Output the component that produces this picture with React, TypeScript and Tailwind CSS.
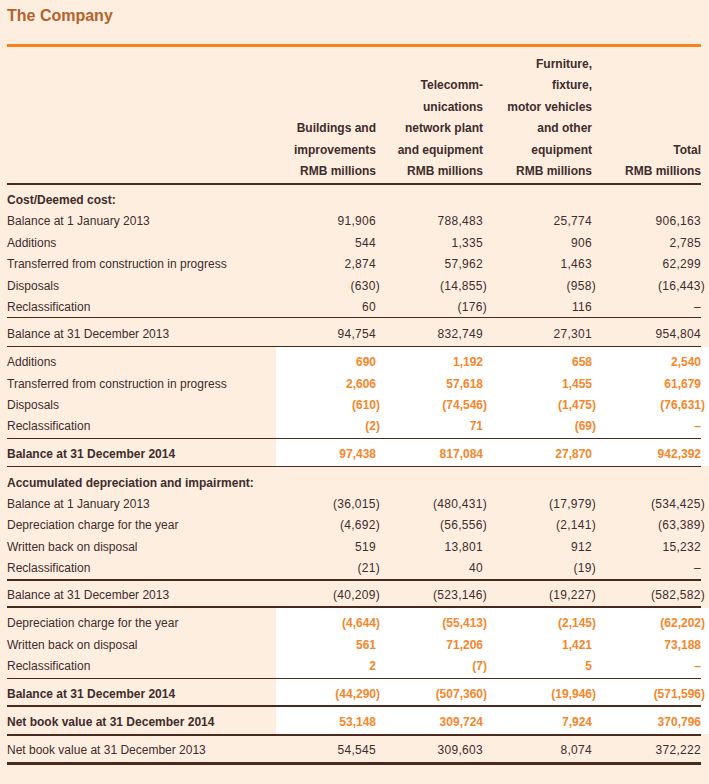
import React from "react";

type Row = {
  label: string;
  vals?: string[];
  boldLabel?: boolean;
};

const DARK = "text-[#3f2c2c]";
const LINE = "bg-[#4a2a1e]";

function Num({ v, orange }: { v: string; orange?: boolean }) {
  const neg = v.startsWith("(");
  const cls = orange
    ? "font-bold text-[#f5862a]"
    : `${DARK} tracking-[0.3px]`;
  return (
    <div className="flex justify-end">
      <span className={`${cls} ${neg ? "-mr-[4px]" : ""}`}>{v}</span>
    </div>
  );
}

function Group({
  rows,
  white,
  orange,
  pad,
}: {
  rows: Row[];
  white?: boolean;
  orange?: boolean;
  pad: string;
}) {
  return (
    <div className="flex">
      <div className={`w-[276px] shrink-0 pl-[7px] ${pad}`}>
        {rows.map((r, i) => (
          <div
            key={i}
            className={`h-[21.4px] pt-[3px] leading-[18.4px] whitespace-nowrap ${DARK} ${
              r.boldLabel ? "font-bold" : ""
            }`}
          >
            {r.label}
          </div>
        ))}
      </div>
      <div className={`flex-1 pr-[8px] ${pad} ${white ? "bg-white" : ""}`}>
        {rows.map((r, i) => (
          <div
            key={i}
            className="grid h-[21.4px] grid-cols-[100px_107px_109px_109px] pt-[3px] leading-[18.4px]"
          >
            {r.vals ? r.vals.map((v, j) => <Num key={j} v={v} orange={orange} />) : null}
          </div>
        ))}
      </div>
    </div>
  );
}

function Line({ h, white }: { h: string; white?: boolean }) {
  return (
    <div className="flex">
      <div className="w-[276px] shrink-0 pl-[7px]">
        <div className={`${h} ${LINE}`} />
      </div>
      <div className={`flex-1 pr-[8px] ${white ? "bg-white" : ""}`}>
        <div className={`${h} ${LINE}`} />
      </div>
    </div>
  );
}

function HeaderCell({ lines }: { lines: string[] }) {
  return (
    <div className="flex flex-col items-end justify-end text-right">
      {lines.map((l, i) => (
        <div key={i} className="h-[21.4px] pt-[3px] leading-[18.4px] whitespace-nowrap">
          {l}
        </div>
      ))}
    </div>
  );
}

export default function App() {
  return (
    <div className="min-h-[784px] w-[709px] bg-[#fdeee0] font-['Liberation_Sans',Arial,sans-serif] text-[12px]">
      <div className="px-[7px] pr-[8px] pt-[6px]">
        <div className="h-[20px] text-[16px] font-bold leading-[20px] text-[#b3612d]">
          The Company
        </div>
        <div className="mt-[18px] h-[3px] bg-[#f5821f]" />
        <div
          className={`grid grid-cols-[269px_100px_107px_109px_109px] pt-[5px] pb-[2.6px] font-bold ${DARK}`}
        >
          <div />
          <HeaderCell lines={["Buildings and", "improvements", "RMB millions"]} />
          <HeaderCell
            lines={["Telecomm-", "unications", "network plant", "and equipment", "RMB millions"]}
          />
          <HeaderCell
            lines={[
              "Furniture,",
              "fixture,",
              "motor vehicles",
              "and other",
              "equipment",
              "RMB millions",
            ]}
          />
          <HeaderCell lines={["Total", "RMB millions"]} />
        </div>
      </div>

      <Line h="h-[2px]" />
      <Group
        pad="pt-[3px] pb-[1px]"
        rows={[
          { label: "Cost/Deemed cost:", boldLabel: true },
          { label: "Balance at 1 January 2013", vals: ["91,906", "788,483", "25,774", "906,163"] },
          { label: "Additions", vals: ["544", "1,335", "906", "2,785"] },
          {
            label: "Transferred from construction in progress",
            vals: ["2,874", "57,962", "1,463", "62,299"],
          },
          { label: "Disposals", vals: ["(630)", "(14,855)", "(958)", "(16,443)"] },
          { label: "Reclassification", vals: ["60", "(176)", "116", "–"] },
        ]}
      />
      <Line h="h-[1px]" />
      <Group
        pad="pt-[4px] pb-[2px]"
        rows={[
          { label: "Balance at 31 December 2013", vals: ["94,754", "832,749", "27,301", "954,804"] },
        ]}
      />
      <Line h="h-[1px]" />
      <Group
        white
        orange
        pad="pt-[3.5px] pb-[2px]"
        rows={[
          { label: "Additions", vals: ["690", "1,192", "658", "2,540"] },
          {
            label: "Transferred from construction in progress",
            vals: ["2,606", "57,618", "1,455", "61,679"],
          },
          { label: "Disposals", vals: ["(610)", "(74,546)", "(1,475)", "(76,631)"] },
          { label: "Reclassification", vals: ["(2)", "71", "(69)", "–"] },
        ]}
      />
      <Line h="h-[1px]" white />
      <Group
        white
        orange
        pad="pt-[3.5px] pb-[2px]"
        rows={[
          {
            label: "Balance at 31 December 2014",
            boldLabel: true,
            vals: ["97,438", "817,084", "27,870", "942,392"],
          },
        ]}
      />
      <Line h="h-[1px]" />
      <Group
        pad="pt-[4px] pb-[1px]"
        rows={[
          { label: "Accumulated depreciation and impairment:", boldLabel: true },
          {
            label: "Balance at 1 January 2013",
            vals: ["(36,015)", "(480,431)", "(17,979)", "(534,425)"],
          },
          {
            label: "Depreciation charge for the year",
            vals: ["(4,692)", "(56,556)", "(2,141)", "(63,389)"],
          },
          { label: "Written back on disposal", vals: ["519", "13,801", "912", "15,232"] },
          { label: "Reclassification", vals: ["(21)", "40", "(19)", "–"] },
        ]}
      />
      <Line h="h-[2px]" />
      <Group
        pad="pt-[2.5px] pb-[2px]"
        rows={[
          {
            label: "Balance at 31 December 2013",
            vals: ["(40,209)", "(523,146)", "(19,227)", "(582,582)"],
          },
        ]}
      />
      <Line h="h-[2px]" />
      <Group
        white
        orange
        pad="pt-[3px] pb-[2.5px]"
        rows={[
          {
            label: "Depreciation charge for the year",
            vals: ["(4,644)", "(55,413)", "(2,145)", "(62,202)"],
          },
          { label: "Written back on disposal", vals: ["561", "71,206", "1,421", "73,188"] },
          { label: "Reclassification", vals: ["2", "(7)", "5", "–"] },
        ]}
      />
      <Line h="h-[1px]" white />
      <Group
        white
        orange
        pad="pt-[3px] pb-[1.5px]"
        rows={[
          {
            label: "Balance at 31 December 2014",
            boldLabel: true,
            vals: ["(44,290)", "(507,360)", "(19,946)", "(571,596)"],
          },
        ]}
      />
      <Line h="h-[2px]" white />
      <Group
        white
        orange
        pad="pt-[2.5px] pb-[3px]"
        rows={[
          {
            label: "Net book value at 31 December 2014",
            boldLabel: true,
            vals: ["53,148", "309,724", "7,924", "370,796"],
          },
        ]}
      />
      <Line h="h-[2px]" />
      <Group
        pad="pt-[2.5px] pb-[2.5px]"
        rows={[
          {
            label: "Net book value at 31 December 2013",
            vals: ["54,545", "309,603", "8,074", "372,222"],
          },
        ]}
      />
      <Line h="h-[3px]" />
    </div>
  );
}
